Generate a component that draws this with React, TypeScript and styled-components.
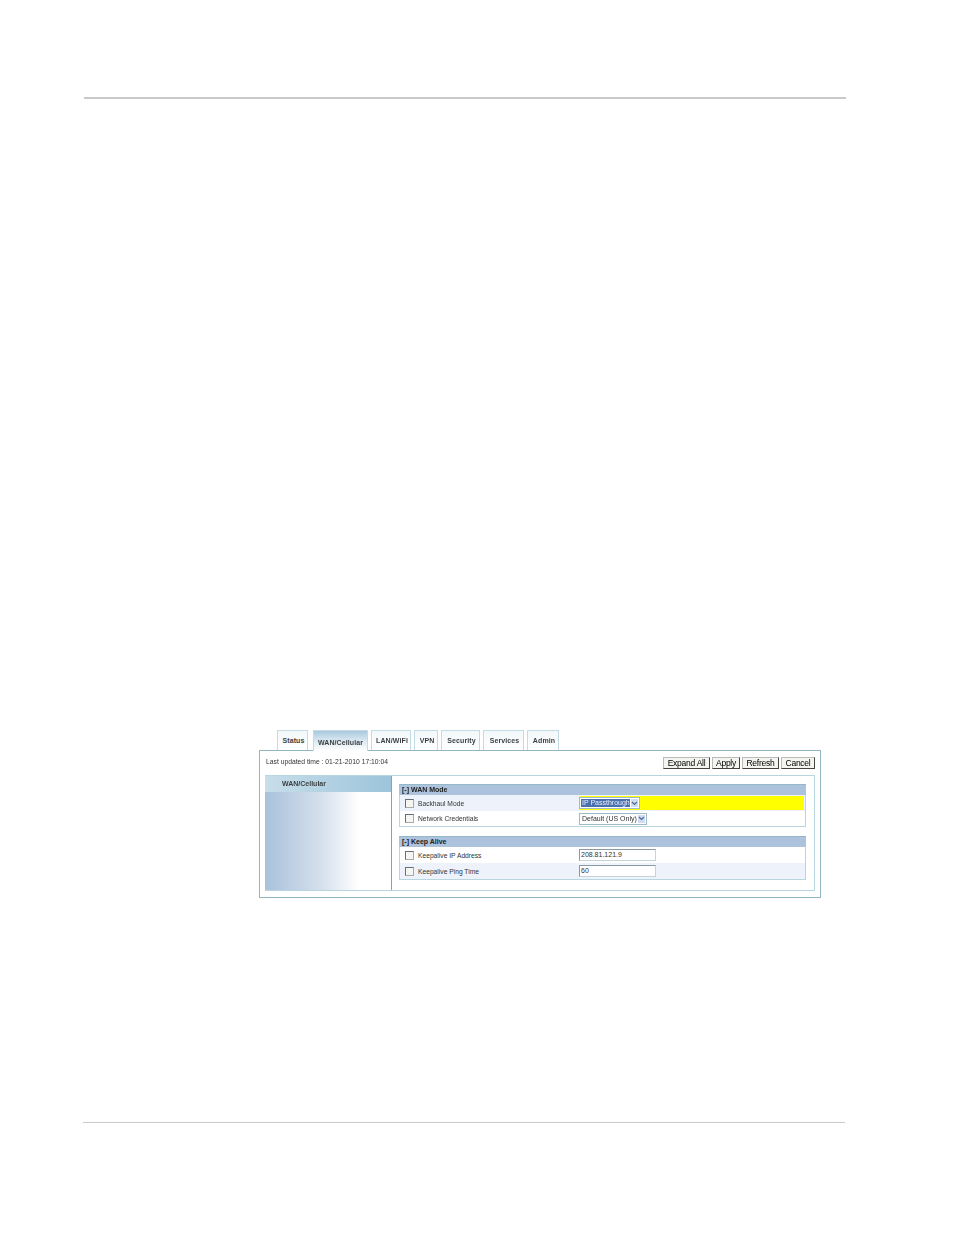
import React from "react";
import styled, { createGlobalStyle } from "styled-components";

const Global = createGlobalStyle`
  html, body { margin: 0; padding: 0; background: #fff; }
  body { font-family: "Liberation Sans", Arial, sans-serif; color: #333; }
`;

const Page = styled.div`
  width: 954px;
  height: 1235px;
  display: flex;
  flex-direction: column;
  overflow: hidden;
`;
const TopRule = styled.div`
  margin: 97px 0 0 84px;
  width: 762px;
  height: 2px;
  background: #c9c9c9;
`;
const Figure = styled.div`
  margin: 631px 0 0 259px;
  width: 562px;
  filter: blur(0.4px);
`;
const TabBar = styled.div`
  display: flex;
  align-items: flex-start;
  gap: 3px;
  padding-left: 18px;
  height: 20px;
`;
const Tab = styled.div<{ $w: number; $active?: boolean }>`
  box-sizing: border-box;
  width: ${(p) => p.$w}px;
  margin-left: ${(p) => (p.$active ? 2 : 0)}px;
  height: ${(p) => (p.$active ? 21 : 20)}px;
  display: flex;
  align-items: center;
  justify-content: center;
  font-size: 7px;
  font-weight: 700;
  letter-spacing: 0.1px;
  color: #3c3f42;
  border: 1px solid #c5dbe4;
  border-bottom: 0;
  position: relative;
  z-index: 1;
  padding-top: ${(p) => (p.$active ? 2 : 0)}px;
  padding-left: ${(p) => (p.$active ? 0 : 2)}px;
  background: ${(p) =>
    p.$active ? "linear-gradient(#a9c9de, #d7e6f0 45%, #fff)" : "linear-gradient(#f3f8fa, #fff)"};
`;
const Outer = styled.div`
  box-sizing: border-box;
  height: 148px;
  border: 1px solid #8fb5c2;
  padding: 5px 5px 6px 5px;
  display: flex;
  flex-direction: column;
`;
const TopLine = styled.div`
  height: 19px;
  display: flex;
  justify-content: space-between;
  align-items: flex-start;
`;
const Updated = styled.div`
  font-size: 6.75px;
  line-height: 10px;
  margin: 1px 0 0 1px;
  color: #333;
`;
const Buttons = styled.div`
  display: flex;
  gap: 2px;
  padding-top: 1px;
`;
const Btn = styled.div<{ $w: number }>`
  box-sizing: border-box;
  width: ${(p) => p.$w}px;
  height: 12px;
  border: 1px solid #444;
  border-left-color: #bbb;
  border-top-color: #bbb;
  background: #f4f4f0;
  color: #000;
  font-size: 8.5px;
  line-height: 10px;
  text-align: center;
  letter-spacing: -0.25px;
`;
const Inner = styled.div`
  flex: 1;
  display: flex;
  border: 1px solid #b9d6e0;
  border-left: 0;
`;
const Side = styled.div`
  width: 126px;
  border-right: 1px solid #7ea6b4;
  background: linear-gradient(90deg, #a9c1db, #d5e0ec 45%, #fff 75%);
`;
const SideHead = styled.div`
  height: 16px;
  background: linear-gradient(90deg, #c8deea, #9cc4da);
  font-size: 7px;
  font-weight: 700;
  line-height: 15px;
  padding-left: 17px;
  color: #3c3f42;
`;
const Main = styled.div`
  flex: 1;
  padding: 8px 8px 0 7px;
  display: flex;
  flex-direction: column;
  gap: 9px;
`;
const Section = styled.div`
  border: 1px solid #b9d6e0;
  border-top: 0;
`;
const SecHead = styled.div`
  height: 10px;
  margin-right: -1px;
  margin-left: -1px;
  background: #adc2dc;
  border-top: 1px solid #93b9c8;
  font-size: 7px;
  font-weight: 700;
  line-height: 10px;
  padding-left: 3px;
  color: #222;
`;
const Row = styled.div<{ $alt?: boolean; $h: number }>`
  display: flex;
  align-items: center;
  height: ${(p) => p.$h}px;
  background: ${(p) => (p.$alt ? "#eef3fb" : "#fff")};
`;
const Box = styled.div`
  box-sizing: border-box;
  width: 9px;
  height: 9px;
  margin-left: 5px;
  border: 1px solid #66707a;
  border-right-color: #aaa;
  border-bottom-color: #aaa;
  background: #f5f5f2;
`;
const Label = styled.div`
  width: 161px;
  margin-left: 4px;
  font-size: 6.7px;
  color: #333;
`;
const Value = styled.div<{ $hl?: boolean }>`
  flex: 1;
  align-self: stretch;
  display: flex;
  align-items: center;
  margin: 1px 1px 1px 0;
  background: ${(p) => (p.$hl ? "#ffff00" : "transparent")};
`;
const Select = styled.div<{ $w: number }>`
  box-sizing: border-box;
  width: ${(p) => p.$w}px;
  height: 12px;
  border: 1px solid #9dbcc8;
  background: #fff;
  display: flex;
  align-items: center;
  padding: 1px;
  gap: 1px;
`;
const SelectText = styled.div<{ $sel?: boolean }>`
  flex: 1;
  height: 100%;
  font-size: 7px;
  line-height: 8px;
  padding-left: 1px;
  white-space: nowrap;
  background: ${(p) => (p.$sel ? "#4a70ae" : "transparent")};
  color: ${(p) => (p.$sel ? "#e8eefa" : "#333")};
`;
const Arrow = styled.div`
  width: 9px;
  height: 100%;
  background: #cfdcf2;
  display: flex;
  align-items: center;
  justify-content: center;
`;
const Input = styled.div`
  box-sizing: border-box;
  width: 77px;
  height: 12px;
  border: 1px solid #8a9aa2;
  border-bottom-color: #c5d4da;
  border-right-color: #c5d4da;
  background: #fff;
  font-size: 7px;
  line-height: 10px;
  padding-left: 1px;
  color: #333;
`;
const Spacer = styled.div`
  flex: 1;
`;
const BottomRule = styled.div`
  margin: 0 0 112px 83px;
  width: 762px;
  height: 1px;
  background: #c9c9c9;
`;

const Chevron = () => (
  <svg width="7" height="5" viewBox="0 0 7 5">
    <path d="M1 1l2.5 2.5L6 1" fill="none" stroke="#4a6a9a" strokeWidth="1.2" />
  </svg>
);

const tabs: [string, number, boolean?][] = [
  ["Status", 31],
  ["WAN/Cellular", 55, true],
  ["LAN/WiFi", 40],
  ["VPN", 24],
  ["Security", 39],
  ["Services", 41],
  ["Admin", 32],
];
const buttons: [string, number][] = [
  ["Expand All", 47],
  ["Apply", 28],
  ["Refresh", 37],
  ["Cancel", 34],
];

export default function App() {
  return (
    <Page>
      <Global />
      <TopRule />
      <Figure>
        <TabBar>
          {tabs.map(([t, w, a]) => (
            <Tab key={t} $w={w} $active={a}>{t}</Tab>
          ))}
        </TabBar>
        <Outer>
          <TopLine>
            <Updated>Last updated time : 01-21-2010 17:10:04</Updated>
            <Buttons>
              {buttons.map(([t, w]) => (
                <Btn key={t} $w={w}>{t}</Btn>
              ))}
            </Buttons>
          </TopLine>
          <Inner>
            <Side>
              <SideHead>WAN/Cellular</SideHead>
            </Side>
            <Main>
              <Section>
                <SecHead>[-] WAN Mode</SecHead>
                <Row $alt $h={16}>
                  <Box />
                  <Label>Backhaul Mode</Label>
                  <Value $hl>
                    <Select $w={61}>
                      <SelectText $sel>IP Passthrough</SelectText>
                      <Arrow><Chevron /></Arrow>
                    </Select>
                  </Value>
                </Row>
                <Row $h={15}>
                  <Box />
                  <Label>Network Credentials</Label>
                  <Value>
                    <Select $w={68}>
                      <SelectText>Default (US Only)</SelectText>
                      <Arrow><Chevron /></Arrow>
                    </Select>
                  </Value>
                </Row>
              </Section>
              <Section>
                <SecHead>[-] Keep Alive</SecHead>
                <Row $h={16}>
                  <Box />
                  <Label>Keepalive IP Address</Label>
                  <Value><Input>208.81.121.9</Input></Value>
                </Row>
                <Row $alt $h={16}>
                  <Box />
                  <Label>Keepalive Ping Time</Label>
                  <Value><Input>60</Input></Value>
                </Row>
              </Section>
            </Main>
          </Inner>
        </Outer>
      </Figure>
      <Spacer />
      <BottomRule />
    </Page>
  );
}
